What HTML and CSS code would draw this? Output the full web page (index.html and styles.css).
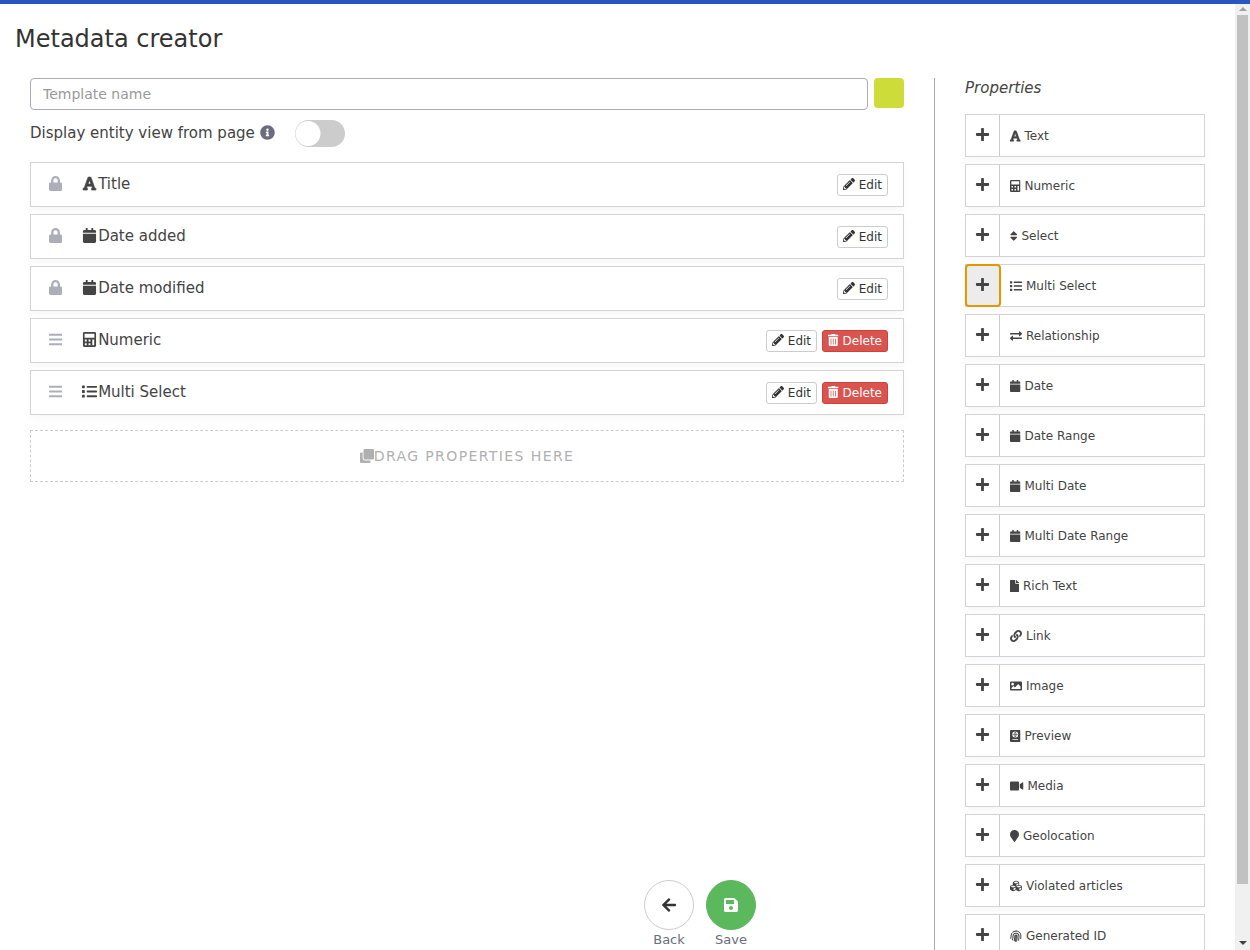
FILE: index.html
```html
<!DOCTYPE html>
<html lang="en">
<head>
<meta charset="utf-8">
<title>Metadata creator</title>
<meta name="viewport" content="width=device-width, initial-scale=1">
<link rel="stylesheet" href="styles.css">
</head>
<body>
<svg class="sprite" aria-hidden="true">
  <symbol id="plus" viewBox="0 0 448 512"><path d="M416 208H272V64c0-17.67-14.33-32-32-32h-32c-17.67 0-32 14.33-32 32v144H32c-17.67 0-32 14.33-32 32v32c0 17.67 14.33 32 32 32h144v144c0 17.67 14.33 32 32 32h32c17.67 0 32-14.33 32-32V304h144c17.67 0 32-14.33 32-32v-32c0-17.67-14.33-32-32-32z"/></symbol>
  <symbol id="font" viewBox="0 0 448 512"><path stroke="currentColor" stroke-width="20" d="M432 416h-23.41L277.53 53.69A32 32 0 0 0 247.58 32h-47.16a32 32 0 0 0-29.95 21.69L39.41 416H16a16 16 0 0 0-16 16v32a16 16 0 0 0 16 16h128a16 16 0 0 0 16-16v-32a16 16 0 0 0-16-16h-19.58l23.3-64h152.56l23.3 64H304a16 16 0 0 0-16 16v32a16 16 0 0 0 16 16h128a16 16 0 0 0 16-16v-32a16 16 0 0 0-16-16zM176.85 272L224 142.51 271.15 272z"/></symbol>
  <symbol id="calculator" viewBox="0 0 448 512"><path fill-rule="evenodd" d="M48 0h352a48 48 0 0 1 48 48v416a48 48 0 0 1-48 48H48a48 48 0 0 1-48-48V48A48 48 0 0 1 48 0zM56 56v136h336V56zM64 256v64h64v-64zM192 256v64h64v-64zM64 384v64h64v-64zM192 384v64h64v-64zM320 256v192h64V256z"/></symbol>
  <symbol id="calendar" viewBox="0 0 448 512"><path d="M12 192h424c6.6 0 12 5.4 12 12v260c0 26.5-21.5 48-48 48H48c-26.5 0-48-21.5-48-48V204c0-6.6 5.4-12 12-12zm436-44v-36c0-26.5-21.5-48-48-48h-48V12c0-6.6-5.4-12-12-12h-40c-6.6 0-12 5.4-12 12v52H160V12c0-6.6-5.4-12-12-12h-40c-6.6 0-12 5.4-12 12v52H48C21.5 64 0 85.5 0 112v36c0 6.6 5.4 12 12 12h424c6.6 0 12-5.4 12-12z"/></symbol>
  <symbol id="list" viewBox="0 0 512 512"><path d="M16 48h64a16 16 0 0 1 16 16v64a16 16 0 0 1-16 16H16a16 16 0 0 1-16-16V64a16 16 0 0 1 16-16zM16 208h64a16 16 0 0 1 16 16v64a16 16 0 0 1-16 16H16a16 16 0 0 1-16-16v-64a16 16 0 0 1 16-16zM16 368h64a16 16 0 0 1 16 16v64a16 16 0 0 1-16 16H16a16 16 0 0 1-16-16v-64a16 16 0 0 1 16-16zM176 64h320a16 16 0 0 1 16 16v32a16 16 0 0 1-16 16H176a16 16 0 0 1-16-16V80a16 16 0 0 1 16-16zM176 224h320a16 16 0 0 1 16 16v32a16 16 0 0 1-16 16H176a16 16 0 0 1-16-16v-32a16 16 0 0 1 16-16zM176 384h320a16 16 0 0 1 16 16v32a16 16 0 0 1-16 16H176a16 16 0 0 1-16-16v-32a16 16 0 0 1 16-16z"/></symbol>
  <symbol id="sort" viewBox="0 0 320 512"><path d="M41 288h238c21.4 0 32.1 25.9 17 41L177 448c-9.4 9.4-24.6 9.4-33.9 0L24 329c-15.1-15.1-4.4-41 17-41zm255-105L177 64c-9.4-9.4-24.6-9.4-33.9 0L24 183c-15.1 15.1-4.4 41 17 41h238c21.4 0 32.1-25.9 17-41z"/></symbol>
  <symbol id="exchange" viewBox="0 0 512 512"><path d="M0 168v-16c0-13.255 10.745-24 24-24h360V80c0-21.367 25.899-32.042 40.971-16.971l80 80c9.372 9.373 9.372 24.569 0 33.941l-80 80C409.956 271.982 384 261.456 384 240v-48H24c-13.255 0-24-10.745-24-24zm488 152H128v-48c0-21.314-25.862-32.08-40.971-16.971l-80 80c-9.372 9.373-9.372 24.569 0 33.941l80 80C102.057 463.997 128 453.437 128 432v-48h360c13.255 0 24-10.745 24-24v-16c0-13.255-10.745-24-24-24z"/></symbol>
  <symbol id="file" viewBox="0 0 384 512"><path d="M224 136V0H24C10.7 0 0 10.7 0 24v464c0 13.3 10.7 24 24 24h336c13.3 0 24-10.7 24-24V160H248c-13.2 0-24-10.8-24-24zm160-14.1v6.1H256V0h6.1c6.4 0 12.5 2.5 17 7l97.9 98c4.5 4.5 7 10.6 7 16.9z"/></symbol>
  <symbol id="link" viewBox="0 0 512 512"><path d="M326.612 185.391c59.747 59.809 58.927 155.698.36 214.59-.11.12-.24.25-.36.37l-67.2 67.2c-59.27 59.27-155.699 59.262-214.96 0-59.27-59.26-59.27-155.7 0-214.96l37.106-37.106c9.84-9.84 26.786-3.3 27.294 10.606.648 17.722 3.826 35.527 9.69 52.721 1.986 5.822.567 12.262-3.783 16.612l-13.087 13.087c-28.026 28.026-28.905 73.66-1.155 101.96 28.024 28.579 74.086 28.749 102.325.51l67.2-67.19c28.191-28.191 28.073-73.757 0-101.83-3.701-3.694-7.429-6.564-10.341-8.569a16.037 16.037 0 0 1-6.947-12.606c-.396-10.567 3.348-21.456 11.698-29.806l21.054-21.055c5.521-5.521 14.182-6.199 20.584-1.731a152.482 152.482 0 0 1 20.522 17.197zM467.547 44.449c-59.261-59.262-155.69-59.27-214.96 0l-67.2 67.2c-.12.12-.25.25-.36.37-58.566 58.892-59.387 154.781.36 214.59a152.454 152.454 0 0 0 20.521 17.196c6.402 4.468 15.064 3.789 20.584-1.731l21.054-21.055c8.35-8.35 12.094-19.239 11.698-29.806a16.037 16.037 0 0 0-6.947-12.606c-2.912-2.005-6.64-4.875-10.341-8.569-28.073-28.073-28.191-73.639 0-101.83l67.2-67.19c28.239-28.239 74.3-28.069 102.325.51 27.75 28.3 26.872 73.934-1.155 101.96l-13.087 13.087c-4.35 4.35-5.769 10.79-3.783 16.612 5.864 17.194 9.042 34.999 9.69 52.721.509 13.906 17.454 20.446 27.294 10.606l37.106-37.106c59.271-59.259 59.271-155.699.001-214.959z"/></symbol>
  <symbol id="image" viewBox="0 0 512 512"><path fill-rule="evenodd" d="M464 448H48c-26.51 0-48-21.49-48-48V112c0-26.51 21.49-48 48-48h416c26.51 0 48 21.49 48 48v288c0 26.51-21.49 48-48 48zM112 120c-30.928 0-56 25.072-56 56s25.072 56 56 56 56-25.072 56-56-25.072-56-56-56zM64 384h384V272l-87.515-87.515c-4.686-4.686-12.284-4.686-16.971 0L208 320l-55.515-55.515c-4.686-4.686-12.284-4.686-16.971 0L64 336v48z"/></symbol>
  <symbol id="passport" viewBox="0 0 448 512"><path fill-rule="evenodd" d="M48 0h352a48 48 0 0 1 48 48v416a48 48 0 0 1-48 48H48a48 48 0 0 1-48-48V48A48 48 0 0 1 48 0zM224 64a128 128 0 1 0 0 256a128 128 0 1 0 0-256zM112 384a16 16 0 0 0 0 32h224a16 16 0 0 0 0-32z"/><path fill="none" stroke="currentColor" stroke-width="22" d="M112 192h224M224 80v224M224 84c-64 60-64 156 0 216M224 84c64 60 64 156 0 216"/></symbol>
  <symbol id="video" viewBox="0 0 576 512"><path d="M336.2 64H47.8C21.4 64 0 85.4 0 111.8v288.4C0 426.6 21.4 448 47.8 448h288.4c26.4 0 47.8-21.4 47.8-47.8V111.8c0-26.4-21.4-47.8-47.8-47.8zm189.4 37.7L416 177.3v157.4l109.6 75.5c21.2 14.6 50.4-.3 50.4-25.8V127.5c0-25.4-29.1-40.4-50.4-25.8z"/></symbol>
  <symbol id="marker" viewBox="0 0 384 512"><path d="M172.268 501.67C26.97 291.031 0 269.413 0 192 0 85.961 85.961 0 192 0s192 85.961 192 192c0 77.413-26.97 99.031-172.268 309.67-9.535 13.774-29.93 13.773-39.464 0z"/></symbol>
  <symbol id="cubes" viewBox="0 0 512 512"><path fill-rule="evenodd" d="M488.6 250.2L392 214V105.5c0-15-9.3-28.4-23.4-33.7l-100-37.5c-8.1-3.1-17.1-3.1-25.3 0l-100 37.5c-14.1 5.3-23.4 18.7-23.4 33.7V214l-96.6 36.2C9.3 255.5 0 268.9 0 283.9V394c0 13.6 7.7 26.1 19.9 32.2l100 50c10.1 5.1 22.1 5.1 32.2 0l103.9-52 103.9 52c10.1 5.1 22.1 5.1 32.2 0l100-50c12.2-6.1 19.9-18.6 19.9-32.2V283.9c0-15-9.3-28.4-23.4-33.7zM358 214.8l-85 31.9v-68.2l85-37v73.3zM154 104.1l102-38.2 102 38.2v.6l-102 41.4-102-41.4v-.6zm84 291.1l-85 42.5v-79.1l85-38.8v75.4zm0-112l-102 41.4-102-41.4v-.6l102-38.2 102 38.2v.6zm240 112l-85 42.5v-79.1l85-38.8v75.4zm0-112l-102 41.4-102-41.4v-.6l102-38.2 102 38.2v.6z"/></symbol>
  <symbol id="fingerprint" viewBox="0 0 512 512"><path fill="none" stroke="currentColor" stroke-width="44" stroke-linecap="round" d="M256 250c2 90-8 160-32 238M180 450c18-62 26-120 26-190a50 50 0 0 1 100 0c0 70-6 140-24 214M104 424c18-56 24-104 24-160a128 128 0 0 1 256 0c0 62-4 110-16 170M28 356c14-32 20-62 20-98 0-40 10-74 28-104M124 92C166 56 214 44 264 44c114 4 200 94 200 210 0 38-2 70-8 104"/></symbol>
  <symbol id="lock" viewBox="0 0 448 512"><path d="M400 224h-24v-72C376 68.2 307.8 0 224 0S72 68.2 72 152v72H48c-26.5 0-48 21.5-48 48v192c0 26.5 21.5 48 48 48h352c26.5 0 48-21.5 48-48V272c0-26.5-21.5-48-48-48zm-104 0H152v-72c0-39.7 32.3-72 72-72s72 32.3 72 72v72z"/></symbol>
  <symbol id="bars" viewBox="0 0 448 512"><path d="M16 60h416a16 16 0 0 1 16 16v40a16 16 0 0 1-16 16H16a16 16 0 0 1-16-16V76a16 16 0 0 1 16-16zM16 220h416a16 16 0 0 1 16 16v40a16 16 0 0 1-16 16H16a16 16 0 0 1-16-16v-40a16 16 0 0 1 16-16zM16 380h416a16 16 0 0 1 16 16v40a16 16 0 0 1-16 16H16a16 16 0 0 1-16-16v-40a16 16 0 0 1 16-16z"/></symbol>
  <symbol id="info" viewBox="0 0 512 512"><path d="M256 8C119.043 8 8 119.083 8 256c0 136.997 111.043 248 248 248s248-111.003 248-248C504 119.083 392.957 8 256 8zm0 110c23.196 0 42 18.804 42 42s-18.804 42-42 42-42-18.804-42-42 18.804-42 42-42zm56 254c0 6.627-5.373 12-12 12h-88c-6.627 0-12-5.373-12-12v-24c0-6.627 5.373-12 12-12h12v-64h-12c-6.627 0-12-5.373-12-12v-24c0-6.627 5.373-12 12-12h64c6.627 0 12 5.373 12 12v100h12c6.627 0 12 5.373 12 12v24z"/></symbol>
  <symbol id="pencil" viewBox="0 0 512 512"><path d="M497.9 142.1l-46.1 46.1c-4.7 4.7-12.3 4.7-17 0l-111-111c-4.7-4.7-4.7-12.3 0-17l46.1-46.1c18.7-18.7 49.1-18.7 67.9 0l60.1 60.1c18.8 18.7 18.8 49.1 0 67.9zM284.2 99.8L21.6 362.4.4 483.9c-2.9 16.4 11.4 30.6 27.8 27.8l121.5-21.3 262.6-262.6c4.7-4.7 4.7-12.3 0-17l-111-111c-4.8-4.7-12.4-4.7-17.1 0zM124.1 339.9c-5.5-5.5-5.5-14.3 0-19.8l154-154c5.5-5.5 14.3-5.5 19.8 0s5.5 14.3 0 19.8l-154 154c-5.5 5.5-14.3 5.5-19.8 0zM88 424h48v36.3l-64.5 11.3-31.1-31.1L51.7 376H88v48z"/></symbol>
  <symbol id="trash" viewBox="0 0 448 512"><path d="M32 464a48 48 0 0 0 48 48h288a48 48 0 0 0 48-48V128H32zm272-256a16 16 0 0 1 32 0v224a16 16 0 0 1-32 0zm-96 0a16 16 0 0 1 32 0v224a16 16 0 0 1-32 0zm-96 0a16 16 0 0 1 32 0v224a16 16 0 0 1-32 0zM432 32H312l-9.4-18.7A24 24 0 0 0 281.1 0H166.8a23.72 23.72 0 0 0-21.4 13.3L136 32H16A16 16 0 0 0 0 48v32a16 16 0 0 0 16 16h416a16 16 0 0 0 16-16V48a16 16 0 0 0-16-16z"/></symbol>
  <symbol id="clone" viewBox="0 0 512 512"><path d="M464 0c26.51 0 48 21.49 48 48v288c0 26.51-21.49 48-48 48H176c-26.51 0-48-21.49-48-48V48c0-26.51 21.49-48 48-48h288M176 416c-44.112 0-80-35.888-80-80V128H48c-26.51 0-48 21.49-48 48v288c0 26.51 21.49 48 48 48h288c26.51 0 48-21.49 48-48v-48H176z"/></symbol>
  <symbol id="arrow" viewBox="0 0 448 512"><path d="M257.5 445.1l-22.2 22.2c-9.4 9.4-24.6 9.4-33.9 0L7 273c-9.4-9.4-9.4-24.6 0-33.9L201.4 44.7c9.4-9.4 24.6-9.4 33.9 0l22.2 22.2c9.5 9.5 9.3 25-.4 34.3L136.6 216H424c13.3 0 24 10.7 24 24v32c0 13.3-10.7 24-24 24H136.6l120.5 114.8c9.8 9.3 10 24.8.4 34.3z"/></symbol>
  <symbol id="save" viewBox="0 0 448 512"><path d="M433.941 129.941l-83.882-83.882A48 48 0 0 0 316.118 32H48C21.49 32 0 53.49 0 80v352c0 26.51 21.49 48 48 48h352c26.51 0 48-21.49 48-48V163.882a48 48 0 0 0-14.059-33.941zM224 416c-35.346 0-64-28.654-64-64 0-35.346 28.654-64 64-64s64 28.654 64 64c0 35.346-28.654 64-64 64zm96-304.52V212c0 6.627-5.373 12-12 12H76c-6.627 0-12-5.373-12-12V108c0-6.627 5.373-12 12-12h228.52c3.183 0 6.235 1.264 8.485 3.515l3.48 3.48A11.996 11.996 0 0 1 320 111.48z"/></symbol>
</svg>

<div class="topbar"></div>
<div class="viewport">
  <main class="page">
    <h1 class="page-title">Metadata creator</h1>
    <div class="columns">
      <section class="editor">
        <div class="name-row">
          <input class="name-input" type="text" placeholder="Template name" aria-label="Template name">
          <button class="color-button" type="button" aria-label="Template color"></button>
        </div>
        <div class="toggle-row">
          <label class="toggle-label" for="entity-view">Display entity view from page <svg class="icon info-icon"><use href="#info"/></svg></label>
          <input class="toggle" id="entity-view" type="checkbox">
        </div>
        <ul class="fields">
          <li class="field"><svg class="icon handle narrow"><use href="#lock"/></svg><svg class="icon kind"><use href="#font"/></svg><span class="field-name">Title</span><button class="btn" type="button"><svg class="icon"><use href="#pencil"/></svg>Edit</button></li>
          <li class="field"><svg class="icon handle narrow"><use href="#lock"/></svg><svg class="icon kind"><use href="#calendar"/></svg><span class="field-name">Date added</span><button class="btn" type="button"><svg class="icon"><use href="#pencil"/></svg>Edit</button></li>
          <li class="field"><svg class="icon handle narrow"><use href="#lock"/></svg><svg class="icon kind"><use href="#calendar"/></svg><span class="field-name">Date modified</span><button class="btn" type="button"><svg class="icon"><use href="#pencil"/></svg>Edit</button></li>
          <li class="field"><svg class="icon handle narrow"><use href="#bars"/></svg><svg class="icon kind"><use href="#calculator"/></svg><span class="field-name">Numeric</span><button class="btn" type="button"><svg class="icon"><use href="#pencil"/></svg>Edit</button><button class="btn btn-danger" type="button"><svg class="icon narrow"><use href="#trash"/></svg>Delete</button></li>
          <li class="field"><svg class="icon handle narrow"><use href="#bars"/></svg><svg class="icon kind"><use href="#list"/></svg><span class="field-name">Multi Select</span><button class="btn" type="button"><svg class="icon"><use href="#pencil"/></svg>Edit</button><button class="btn btn-danger" type="button"><svg class="icon narrow"><use href="#trash"/></svg>Delete</button></li>
        </ul>
        <div class="dropzone"><svg class="icon"><use href="#clone"/></svg><span>Drag properties here</span></div>
      </section>

      <aside class="sidebar">
        <h2 class="sidebar-title">Properties</h2>
        <ul class="properties">
          <li class="property"><button class="add" type="button" aria-label="Add Text"><svg class="icon"><use href="#plus"/></svg></button><span class="property-name"><svg class="icon narrow"><use href="#font"/></svg>Text</span></li>
          <li class="property"><button class="add" type="button" aria-label="Add Numeric"><svg class="icon"><use href="#plus"/></svg></button><span class="property-name"><svg class="icon narrow"><use href="#calculator"/></svg>Numeric</span></li>
          <li class="property"><button class="add" type="button" aria-label="Add Select"><svg class="icon"><use href="#plus"/></svg></button><span class="property-name"><svg class="icon slim"><use href="#sort"/></svg>Select</span></li>
          <li class="property"><button class="add focused" type="button" aria-label="Add Multi Select"><svg class="icon"><use href="#plus"/></svg></button><span class="property-name"><svg class="icon"><use href="#list"/></svg>Multi Select</span></li>
          <li class="property"><button class="add" type="button" aria-label="Add Relationship"><svg class="icon"><use href="#plus"/></svg></button><span class="property-name"><svg class="icon"><use href="#exchange"/></svg>Relationship</span></li>
          <li class="property"><button class="add" type="button" aria-label="Add Date"><svg class="icon"><use href="#plus"/></svg></button><span class="property-name"><svg class="icon narrow"><use href="#calendar"/></svg>Date</span></li>
          <li class="property"><button class="add" type="button" aria-label="Add Date Range"><svg class="icon"><use href="#plus"/></svg></button><span class="property-name"><svg class="icon narrow"><use href="#calendar"/></svg>Date Range</span></li>
          <li class="property"><button class="add" type="button" aria-label="Add Multi Date"><svg class="icon"><use href="#plus"/></svg></button><span class="property-name"><svg class="icon narrow"><use href="#calendar"/></svg>Multi Date</span></li>
          <li class="property"><button class="add" type="button" aria-label="Add Multi Date Range"><svg class="icon"><use href="#plus"/></svg></button><span class="property-name"><svg class="icon narrow"><use href="#calendar"/></svg>Multi Date Range</span></li>
          <li class="property"><button class="add" type="button" aria-label="Add Rich Text"><svg class="icon"><use href="#plus"/></svg></button><span class="property-name"><svg class="icon page-wide"><use href="#file"/></svg>Rich Text</span></li>
          <li class="property"><button class="add" type="button" aria-label="Add Link"><svg class="icon"><use href="#plus"/></svg></button><span class="property-name"><svg class="icon"><use href="#link"/></svg>Link</span></li>
          <li class="property"><button class="add" type="button" aria-label="Add Image"><svg class="icon"><use href="#plus"/></svg></button><span class="property-name"><svg class="icon"><use href="#image"/></svg>Image</span></li>
          <li class="property"><button class="add" type="button" aria-label="Add Preview"><svg class="icon"><use href="#plus"/></svg></button><span class="property-name"><svg class="icon narrow"><use href="#passport"/></svg>Preview</span></li>
          <li class="property"><button class="add" type="button" aria-label="Add Media"><svg class="icon"><use href="#plus"/></svg></button><span class="property-name"><svg class="icon wide"><use href="#video"/></svg>Media</span></li>
          <li class="property"><button class="add" type="button" aria-label="Add Geolocation"><svg class="icon"><use href="#plus"/></svg></button><span class="property-name"><svg class="icon page-wide"><use href="#marker"/></svg>Geolocation</span></li>
          <li class="property"><button class="add" type="button" aria-label="Add Violated articles"><svg class="icon"><use href="#plus"/></svg></button><span class="property-name"><svg class="icon"><use href="#cubes"/></svg>Violated articles</span></li>
          <li class="property"><button class="add" type="button" aria-label="Add Generated ID"><svg class="icon"><use href="#plus"/></svg></button><span class="property-name"><svg class="icon"><use href="#fingerprint"/></svg>Generated ID</span></li>
        </ul>
      </aside>
    </div>
    <div class="actions">
      <button class="action" type="button"><span class="circle"><svg class="icon"><use href="#arrow"/></svg></span>Back</button>
      <button class="action action-save" type="button"><span class="circle"><svg class="icon"><use href="#save"/></svg></span>Save</button>
    </div>
  </main>
  <div class="scrollbar" aria-hidden="true">
    <span class="scroll-arrow up"></span>
    <span class="scroll-track"><span class="scroll-thumb"></span></span>
    <span class="scroll-arrow down"></span>
  </div>
</div>
</body>
</html>
```

FILE: styles.css
```css
* {
  box-sizing: border-box;
}

body {
  display: flex;
  flex-direction: column;
  height: 100vh;
  margin: 0;
  overflow: hidden;
  background: #fff;
  color: #444;
  font: 15px/20px "DejaVu Sans", sans-serif;
}

button,
input {
  margin: 0;
  font-family: inherit;
  color: inherit;
}

ul {
  margin: 0;
  padding: 0;
  list-style: none;
}

.sprite {
  display: none;
}

.icon {
  flex: none;
  width: 1em;
  height: 1em;
  fill: currentColor;
}

.icon.slim {
  width: 0.625em;
}

.icon.page-wide {
  width: 0.75em;
}

.icon.narrow {
  width: 0.875em;
}

.icon.wide {
  width: 1.125em;
}

.topbar {
  flex: none;
  height: 4px;
  background: #2b56c1;
}

.viewport {
  display: flex;
  flex: 1;
  min-height: 0;
}

.page {
  position: relative;
  flex: 1;
  min-width: 0;
  overflow: hidden;
}

.page-title {
  margin: 0;
  padding: 20px 15px 24px;
  color: #333;
  font-size: 24px;
  font-weight: 400;
  line-height: 30px;
}

.columns {
  display: flex;
}

.editor {
  flex: 1;
  min-width: 0;
  padding: 0 30px;
}

.name-row {
  display: flex;
  gap: 6px;
}

.name-input {
  flex: 1;
  min-width: 0;
  height: 32px;
  padding: 0 12px;
  border: 1px solid #aaaab8;
  border-radius: 4px;
  background: #fff;
  font-size: 14px;
}

.name-input::placeholder {
  color: #999;
  opacity: 1;
}

.color-button {
  width: 30px;
  height: 30px;
  padding: 0;
  border: 0;
  border-radius: 4px;
  background: #cddc39;
}

.toggle-row {
  display: flex;
  align-items: center;
  gap: 20px;
  padding: 10px 0 15px;
}

.toggle-label {
  display: flex;
  align-items: center;
  gap: 5px;
  padding-bottom: 2px;
}

.info-icon {
  color: #6c6c80;
}

.toggle {
  width: 50px;
  height: 27px;
  border-radius: 14px;
  background: radial-gradient(circle at 13px 50%, #fff 12px, #ccc 13px);
  appearance: none;
}

.fields {
  display: grid;
  gap: 7px;
}

.field {
  display: flex;
  align-items: center;
  gap: 5px;
  height: 45px;
  padding: 0 15px 0 18px;
  border: 1px solid #d4d4d8;
  background: #fff;
  box-shadow: 0 4px 8px rgba(0, 0, 0, 0.03);
}

.handle,
.kind,
.btn .icon {
  margin-bottom: 2px;
}

.handle {
  color: #aeaebb;
}

.kind {
  margin-left: 15px;
}

.field-name {
  flex: 1;
  margin-left: -4px;
  padding-bottom: 2px;
}

.btn {
  display: flex;
  align-items: center;
  gap: 4px;
  padding: 1px 5px;
  border: 1px solid #ccc;
  border-radius: 3px;
  background: #fff;
  color: #333;
  font-size: 12px;
  line-height: 18px;
}

.btn-danger {
  border-color: #d43f3a;
  background: #d9534f;
  color: #fff;
}

.dropzone {
  display: flex;
  align-items: center;
  justify-content: center;
  height: 52px;
  margin-top: 15px;
  border: 1px dashed #ccc;
  color: #b0b0b0;
  font-size: 14px;
  letter-spacing: 0.1em;
  text-transform: uppercase;
}

.sidebar {
  width: 301px;
  padding: 0 30px;
  border-left: 1px solid #aaaab8;
}

.sidebar-title {
  margin: 0 0 16px;
  font-size: 15px;
  font-style: italic;
  font-weight: 400;
  line-height: 20px;
}

.properties {
  display: grid;
  gap: 7px;
}

.property {
  display: flex;
  height: 43px;
  border: 1px solid #d4d4d8;
  background: #fff;
  box-shadow: 0 4px 8px rgba(0, 0, 0, 0.03);
}

.add {
  display: flex;
  align-items: center;
  justify-content: center;
  width: 34px;
  padding: 0 0 2px;
  border: 0;
  border-right: 1px solid #ccc;
  background: #fff;
  font-size: 15px;
}

.add.focused {
  border-radius: 3px;
  outline: 2px solid #e59700;
  outline-offset: -1px;
  background: #ececec;
}

.property-name {
  display: flex;
  align-items: center;
  gap: 4px;
  padding-left: 10px;
  font-size: 12px;
}

.actions {
  position: absolute;
  right: 0;
  bottom: 0;
  left: 165px;
  display: flex;
  justify-content: center;
  gap: 12px;
  pointer-events: none;
}

.action {
  width: 50px;
  padding: 0;
  border: 0;
  background: none;
  color: #6c6c80;
  font-size: 13px;
  line-height: 20px;
  pointer-events: auto;
}

.circle {
  display: flex;
  align-items: center;
  justify-content: center;
  height: 50px;
  border: 1px solid #ccc;
  border-radius: 50%;
  background: #fff;
  color: #333;
  font-size: 16px;
}

.action-save .circle {
  border-color: #5cb85c;
  background: #5cb85c;
  color: #fff;
}

.scrollbar {
  display: flex;
  flex: none;
  flex-direction: column;
  align-items: center;
  justify-content: space-between;
  width: 15px;
  padding: 2px 0 5px;
  background: #f0f0f0;
}

.scroll-arrow {
  border: 4px solid transparent;
}

.scroll-arrow.up {
  border-top: 0;
  border-bottom-color: #a0a0a0;
  margin-top: 1px;
}

.scroll-arrow.down {
  border-bottom: 0;
  border-top-color: #404040;
}

.scroll-track {
  flex: 1;
  width: 11px;
  margin: 4px 0 2px;
}

.scroll-thumb {
  display: block;
  height: 94%;
  background: #c1c1c1;
}
```
